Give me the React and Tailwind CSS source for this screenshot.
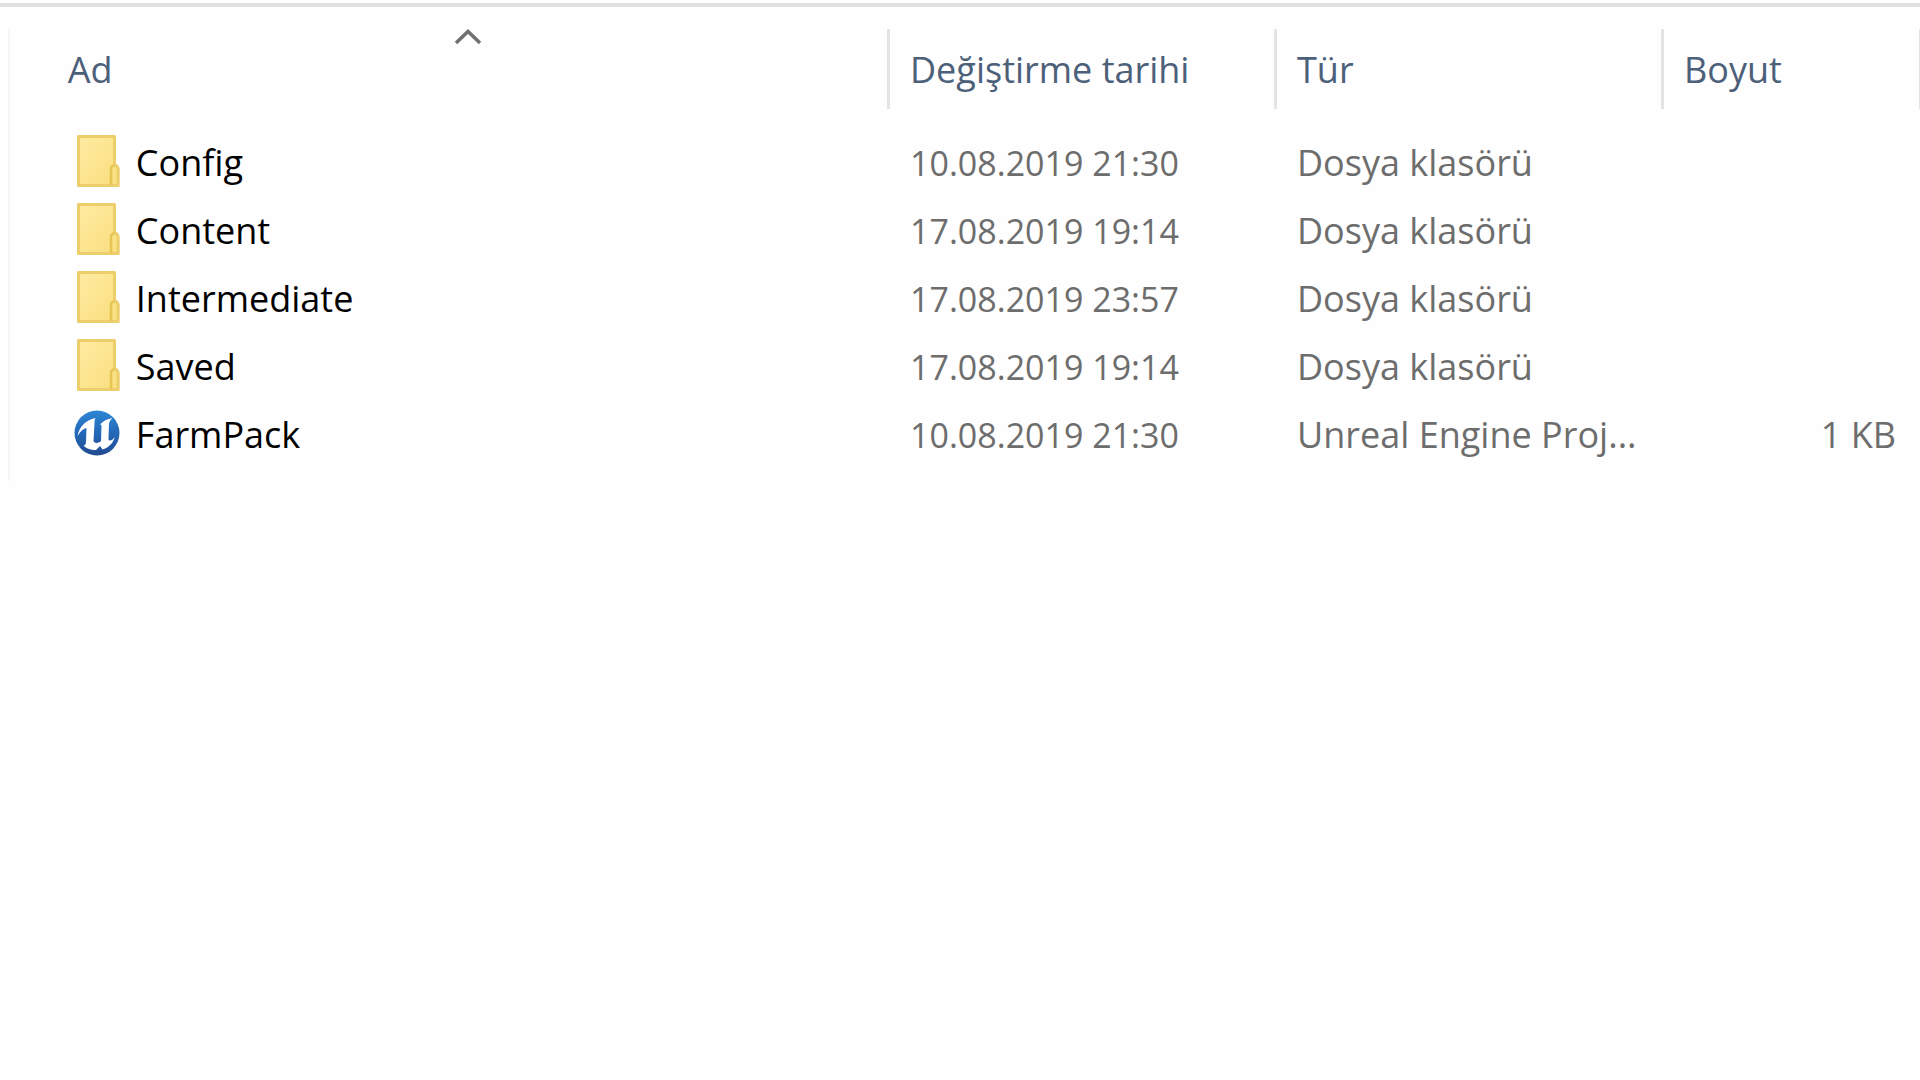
const columns = [
  { key: "name", label: "Ad", sorted: true },
  { key: "date", label: "Değiştirme tarihi" },
  { key: "type", label: "Tür" },
  { key: "size", label: "Boyut", last: true },
];

const files = [
  { name: "Config", date: "10.08.2019 21:30", type: "Dosya klasörü", size: "", icon: "folder" },
  { name: "Content", date: "17.08.2019 19:14", type: "Dosya klasörü", size: "", icon: "folder" },
  { name: "Intermediate", date: "17.08.2019 23:57", type: "Dosya klasörü", size: "", icon: "folder" },
  { name: "Saved", date: "17.08.2019 19:14", type: "Dosya klasörü", size: "", icon: "folder" },
  { name: "FarmPack", date: "10.08.2019 21:30", type: "Unreal Engine Proj...", size: "1 KB", icon: "unreal" },
];

const FolderIcon = () => (
  <svg className="h-[52px] w-[46px] shrink-0" viewBox="0 0 46 52" aria-hidden="true">
    <defs>
      <linearGradient id="folder" x1="0" y1="0" x2="1" y2="1">
        <stop offset="0" stopColor="#ffeba2" />
        <stop offset="1" stopColor="#fade7e" />
      </linearGradient>
    </defs>
    <path
      d="M4.5 1.500H40.500V29.500Q44.200 31 44.200 35V50.500H4.500Z"
      fill="url(#folder)"
      stroke="#ecce6b"
      strokeWidth="3"
      strokeLinejoin="round"
    />
    <path
      d="M37 50V34Q37 30.500 40.500 30.500"
      fill="none"
      stroke="#e6c555"
      strokeWidth="2.6"
    />
  </svg>
);

const UnrealIcon = () => (
  <svg className="h-[46px] w-[46px] shrink-0" viewBox="0 0 46 46" aria-hidden="true">
    <defs>
      <linearGradient id="unreal" x1="0" y1="0" x2="0" y2="1">
        <stop offset="0" stopColor="#2c86d4" />
        <stop offset="0.5" stopColor="#2468b8" />
        <stop offset="1" stopColor="#214a90" />
      </linearGradient>
    </defs>
    <circle cx="23" cy="23" r="22.5" fill="url(#unreal)" />
    <path
      d="M21.500 8C12 10 5.500 16 3.500 26C6.500 21 9.500 18.500 12.500 18L12 31.500C12 34 11 35.500 9.500 35.500C13 39 17 40 22 40L26 36L28.500 39.500C34 38 38.500 34 41 27C39 29.500 37.500 30.500 36 30.500C35 30.500 34.500 30 34.500 28.500L35 14C35 12 36.500 10 38.500 8C33 9 29 11 26 14.500C27 14.500 27.500 15 27.500 16L27 31C25.500 33 20.500 34 19.500 31L20.500 13C20.500 11 20.500 10 21.500 8Z"
      fill="#fff"
    />
  </svg>
);

const SortArrow = () => (
  <svg className="absolute left-1/2 top-0 h-4 w-7 -translate-x-1/2" viewBox="0 0 28 16" aria-hidden="true">
    <path d="M2 14L14 2.500L26 14" fill="none" stroke="#707070" strokeWidth="3.5" />
  </svg>
);

const App = () => {
  return (
    <div className="min-h-screen bg-[#fefefe] pt-[3px] font-['Open_Sans','Noto_Sans',sans-serif] text-[36px] leading-[46px]">
      <div className="h-1 bg-[#e0e0e0]" />

      <main className="mt-[22px] flex">
        {/* edge of the navigation pane */}
        <div className="mr-10 w-[10px] border-r-2 border-[#f6f6f6]" />

        <table className="mb-3 w-full table-fixed border-collapse text-left">
          <colgroup>
            <col />
            <col className="w-[387px]" />
            <col className="w-[387px]" />
            <col className="w-[256px]" />
          </colgroup>
          <thead>
            <tr>
              {columns.map((column) => (
                <th
                  key={column.key}
                  aria-sort={column.sorted ? "ascending" : undefined}
                  className="p-0 pb-5 font-normal text-[#4c607a]"
                >
                  <button
                    type="button"
                    className={`relative block h-20 w-full border-[#e4e4e4] pt-[2px] text-left ${
                      column.last ? "border-r" : "border-r-[3px]"
                    } ${column.sorted ? "pl-[18px]" : "pl-5"}`}
                  >
                    {column.sorted && <SortArrow />}
                    {column.label}
                  </button>
                </th>
              ))}
            </tr>
          </thead>
          <tbody>
            {files.map((file) => (
              <tr key={file.name} className="h-[68px] text-[#6d6d6d]">
                <td className="p-0 pl-6 text-black">
                  <div className="flex items-center gap-4">
                    <div className="pb-1">
                      {file.icon === "folder" ? <FolderIcon /> : <UnrealIcon />}
                    </div>
                    {file.name}
                  </div>
                </td>
                <td className="p-0 pl-5 text-[34px]">{file.date}</td>
                <td className="truncate p-0 pl-5">{file.type}</td>
                <td className="p-0 pr-6 text-right">{file.size}</td>
              </tr>
            ))}
          </tbody>
        </table>
      </main>
    </div>
  );
};

export default App;
